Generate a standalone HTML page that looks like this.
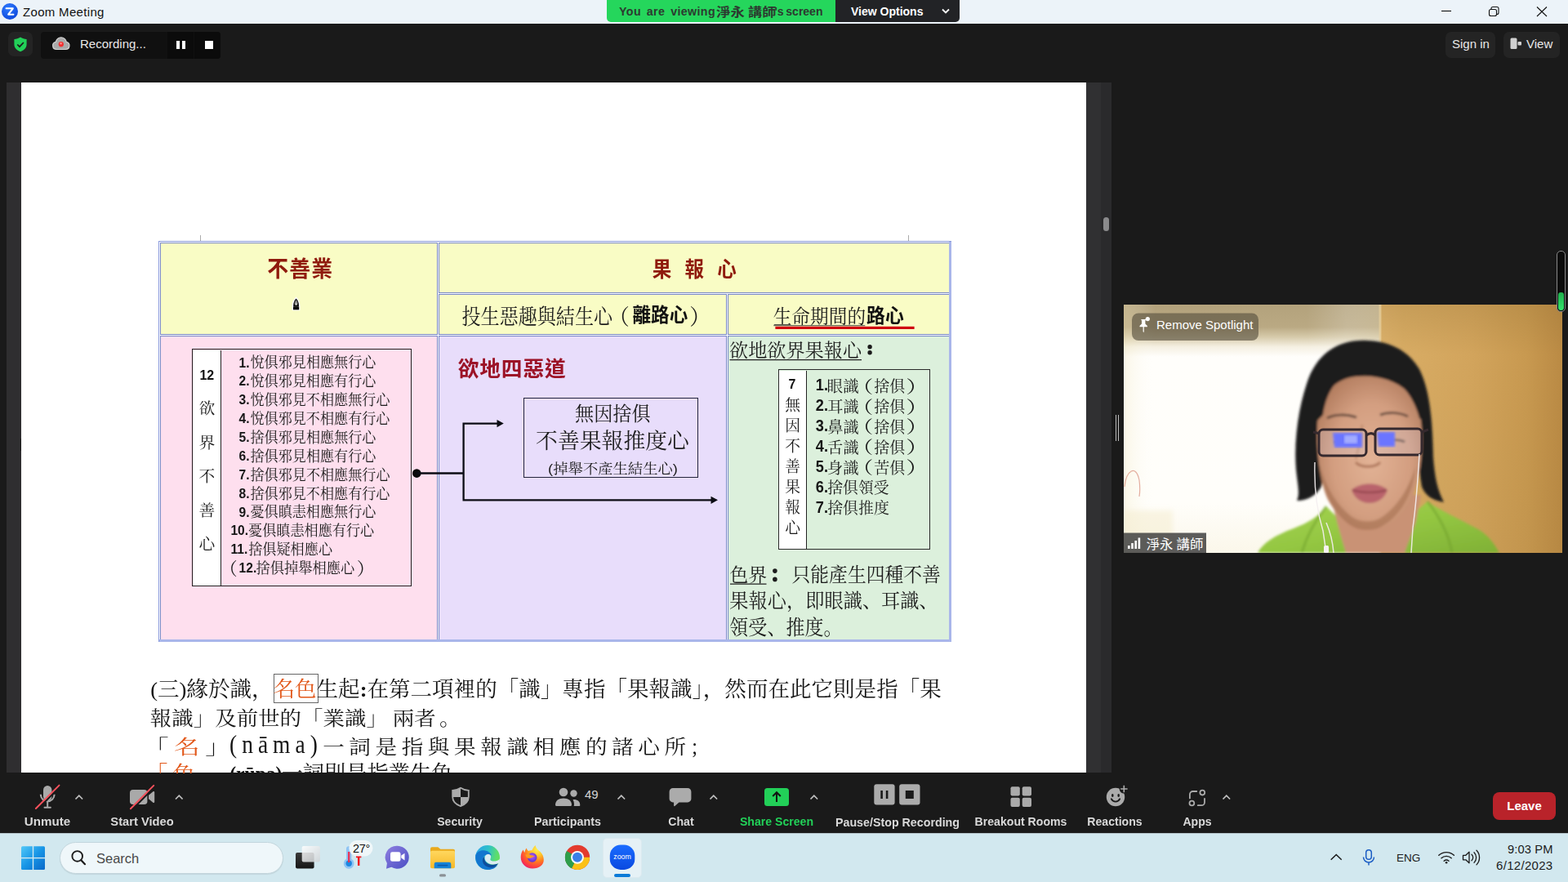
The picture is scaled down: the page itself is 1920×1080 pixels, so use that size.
<!DOCTYPE html>
<html lang="en">
<head>
<meta charset="utf-8">
<title>Zoom Meeting</title>
<style>
*{box-sizing:border-box;margin:0;padding:0}
html,body{width:1920px;height:1080px;overflow:hidden;background:#1a1a1a}
body{position:relative;font-family:"Liberation Sans",sans-serif;color:#fff}
.abs{position:absolute}
svg{position:absolute;overflow:visible}
/* title bar */
#titlebar{left:0;top:0;width:1920px;height:29px;background:#ecf3f9}
#titlebar .ttl{left:28px;top:5px;font-size:15px;line-height:19px;color:#111;letter-spacing:.32px}
/* banner */
#bn-g{left:743px;top:0;width:281px;height:26.5px;background:#25d65c;border-radius:0 0 0 5px}
#bn-d{left:1023px;top:0;width:152px;height:26.5px;background:#222326;border-radius:0 0 5px 0}
.bn-t{top:5px;font-size:14px;line-height:19px;font-weight:bold;white-space:pre}
/* top controls */
.pill{background:#242424;border-radius:7px}
.tctl{font-size:15px;line-height:20px;color:#e8e8e8}
/* slide */
#page{left:26px;top:101px;width:1304px;height:846px;background:#fff;overflow:hidden}
.cell{position:absolute;border:1px solid #7686c6}
.ybg{background:#f9fcc5}.pbg{background:#fedfee}.lbg{background:#e8ddfb}.gbg{background:#dcf0dc}
/* toolbar */
.tb{font-size:15px;line-height:20px;color:#d9d9d9;white-space:nowrap;text-align:center;top:995.6px;font-weight:bold;transform:scaleX(.94)}
.car{stroke:#c2c2c2;stroke-width:1.7;fill:none}
/* taskbar */
#taskbar{left:0;top:1020px;width:1920px;height:60px;background:#d2e8ef}
.tray{font-size:15px;line-height:18px;color:#1b1b1b;white-space:nowrap}
/* slide text */
.tm{font-family:"Liberation Serif","Noto Serif CJK SC",serif;font-size:100px}
.tsb{font-family:"Liberation Sans","Noto Sans CJK TC",sans-serif;font-size:100px;font-weight:bold}
.tsr{font-family:"Liberation Sans","Noto Sans CJK TC",sans-serif;font-size:100px}
.tlb{font-family:"Liberation Sans",sans-serif;font-size:100px;font-weight:bold}
.tls{font-family:"Liberation Serif","Noto Serif CJK SC",serif;font-size:100px}
.tlsb{font-family:"Liberation Serif","Noto Serif CJK SC",serif;font-size:100px;font-weight:bold}
</style>
</head>
<body>

<!-- ===== Title bar ===== -->
<div id="titlebar" class="abs">
  <svg style="left:2px;top:4px" width="20" height="20" viewBox="0 0 20 20">
    <defs><radialGradient id="zg" cx=".4" cy=".3" r=".8"><stop offset="0" stop-color="#2f7bff"/><stop offset="1" stop-color="#0b44d8"/></radialGradient></defs>
    <circle cx="10" cy="10" r="10" fill="url(#zg)"/>
    <path d="M5.6 6.3h8.2l-5.6 7.4h6.2" fill="none" stroke="#fff" stroke-width="2.1" stroke-linejoin="round" stroke-linecap="round"/>
  </svg>
  <div class="abs ttl">Zoom Meeting</div>
  <svg style="left:1760px;top:0" width="160" height="29" viewBox="0 0 160 29" fill="none" stroke="#111" stroke-width="1.1">
    <path d="M5 13.5h12"/>
    <rect x="63.5" y="11.5" width="9" height="8" rx="2"/><path d="M66 11.5v-1a2 2 0 0 1 2-2h5a2 2 0 0 1 2 2v5a2 2 0 0 1-2 2h-.5"/>
    <path d="M122 8.5l12 11.5M134 8.5l-12 11.5"/>
  </svg>
</div>

<!-- ===== Viewing banner ===== -->
<div id="bn-g" class="abs"></div>
<div id="bn-d" class="abs"></div>
<div class="abs bn-t" style="left:758px;color:#2c3a30;word-spacing:2.5px;letter-spacing:.4px;font-size:14.2px">You are viewing</div>
<div class="abs bn-t" style="left:948.5px;color:#2c3a30;word-spacing:-1.2px">'s screen</div>
<div class="abs bn-t" style="left:1042px;color:#fff">View Options</div>
<svg style="left:1152px;top:9px" width="12" height="9" viewBox="0 0 12 9"><path d="M2 2.5l4 4 4-4" fill="none" stroke="#fff" stroke-width="1.8"/></svg>

<!-- ===== Top controls ===== -->
<div class="abs pill" style="left:10px;top:39px;width:30px;height:30px"></div>
<svg style="left:16px;top:45px" width="18" height="19" viewBox="0 0 18 19">
  <path d="M9 .6c2.4 1.6 5 2.3 7.6 2.4v6.3c0 4.2-3 7.3-7.6 9-4.6-1.7-7.6-4.8-7.6-9V3C4 2.9 6.6 2.2 9 .6z" fill="#22d058"/>
  <path d="M5.3 9.5l2.7 2.7 4.9-5.2" fill="none" stroke="#1a1a1a" stroke-width="1.7"/>
</svg>
<div class="abs" style="left:50px;top:39px;width:220px;height:33px;background:#101010;border-radius:4px"></div>
<div class="abs" style="left:205px;top:39px;width:32px;height:33px;background:#0b0b0b"></div>
<div class="abs" style="left:238px;top:39px;width:32px;height:33px;background:#0b0b0b;border-radius:0 4px 4px 0"></div>
<svg style="left:63px;top:43px" width="24" height="19" viewBox="0 0 24 19">
  <path d="M6.3 17.5a4.6 4.6 0 0 1-1-9.1 6.6 6.6 0 0 1 13 0 4.6 4.6 0 0 1-1 9.1z" fill="#a9a9a9" stroke="#d6d6d6" stroke-width="1.2"/>
  <circle cx="11.8" cy="11.2" r="3.1" fill="#f22f2f"/><circle cx="11.6" cy="10.3" r="1.2" fill="#ff8a8a"/>
</svg>
<div class="abs tctl" style="left:98px;top:44px">Recording...</div>
<div class="abs" style="left:216px;top:50px;width:4px;height:10px;background:#fff"></div>
<div class="abs" style="left:223px;top:50px;width:4px;height:10px;background:#fff"></div>
<div class="abs" style="left:251px;top:50px;width:10px;height:10px;background:#fff"></div>

<div class="abs pill" style="left:1770px;top:39px;width:61px;height:32px"></div>
<div class="abs tctl" style="left:1778px;top:44px">Sign in</div>
<div class="abs pill" style="left:1841px;top:39px;width:69px;height:32px"></div>
<svg style="left:1849px;top:46px" width="15" height="15" viewBox="0 0 15 15"><rect x=".5" y=".5" width="8" height="13.5" rx="1.5" fill="#d0d0d0"/><rect x="9.5" y="5" width="4.5" height="4.5" rx="1" fill="#d0d0d0"/></svg>
<div class="abs tctl" style="left:1869px;top:44px">View</div>

<!-- ===== Shared-screen viewer ===== -->
<div class="abs" style="left:8px;top:101px;width:18px;height:846px;background:#2f2e30"></div>
<div class="abs" style="left:25px;top:537px;width:1px;height:15px;background:#1b1b1b"></div>
<div class="abs" style="left:1330px;top:101px;width:18px;height:846px;background:#303032"></div>
<div class="abs" style="left:1348px;top:101px;width:13px;height:846px;background:#2a2a2c"></div>
<div class="abs" style="left:1351px;top:266px;width:7px;height:17px;border-radius:3.5px;background:#8a8a8c"></div>
<div class="abs" style="left:1366px;top:508px;width:1px;height:32px;background:#bdbdbd"></div>
<div class="abs" style="left:1369px;top:508px;width:1px;height:32px;background:#bdbdbd"></div>

<div id="page" class="abs"></div>
<!-- table (page coordinates) -->
<div class="abs" style="left:194px;top:295px;width:971px;height:491px;border:1px solid #8a9adc;background:#fff"></div>
<div class="cell ybg" style="left:196px;top:297px;width:340px;height:113px"></div>
<div class="cell ybg" style="left:537px;top:297px;width:626px;height:62px"></div>
<div class="cell ybg" style="left:537px;top:360px;width:353px;height:50px"></div>
<div class="cell ybg" style="left:891px;top:360px;width:272px;height:50px"></div>
<div class="cell pbg" style="left:196px;top:411px;width:340px;height:373px"></div>
<div class="cell lbg" style="left:537px;top:411px;width:353px;height:373px"></div>
<div class="cell gbg" style="left:891px;top:411px;width:272px;height:373px"></div>
<div class="abs" style="left:1162px;top:296px;width:3px;height:489px;background:#a9b6ea"></div>
<div class="abs" style="left:195px;top:783px;width:970px;height:3px;background:#a9b6ea"></div>
<div class="abs" style="left:245px;top:288px;width:1px;height:7px;background:#aaa"></div>
<div class="abs" style="left:1112px;top:288px;width:1px;height:7px;background:#aaa"></div>
<!-- inner boxes -->
<div class="abs" style="left:235px;top:427px;width:269px;height:291px;border:1.5px solid #222"></div>
<div class="abs" style="left:236.5px;top:428.5px;width:34px;height:288px;background:#fff;border-right:1.5px solid #222"></div>
<div class="abs" style="left:641px;top:487px;width:214px;height:98px;border:1.3px solid #23233a"></div>
<div class="abs" style="left:952.5px;top:452px;width:186.5px;height:221px;border:1.4px solid #2a2a2a"></div>
<div class="abs" style="left:954px;top:453.5px;width:34px;height:218px;background:#fff;border-right:1.4px solid #222"></div>
<div class="abs" style="left:335px;top:825px;width:55px;height:36px;border:1px solid #666"></div>



<!-- ===== Video tile ===== -->
<svg style="left:1376px;top:373px" width="537" height="304" viewBox="1376 373 537 304">
  <defs>
    <clipPath id="vclip"><rect x="1376" y="373" width="537" height="304"/></clipPath>
    <linearGradient id="vbg" x1="0" y1="0" x2="0" y2="1"><stop offset="0" stop-color="#b3a27c"/><stop offset=".09" stop-color="#baa983"/><stop offset=".13" stop-color="#d6caaa"/><stop offset=".17" stop-color="#f5f0e2"/><stop offset=".21" stop-color="#fffefb"/><stop offset=".8" stop-color="#fffefa"/><stop offset="1" stop-color="#fbf7ea"/></linearGradient>
    <linearGradient id="vbgx" x1="0" y1="0" x2="1" y2="0"><stop offset="0" stop-color="#efe4b8" stop-opacity=".3"/><stop offset=".12" stop-color="#fff" stop-opacity="0"/><stop offset=".7" stop-color="#fff" stop-opacity="0"/><stop offset=".85" stop-color="#fff" stop-opacity=".18"/><stop offset="1" stop-color="#e6d9b6" stop-opacity=".3"/></linearGradient>
    <linearGradient id="wood" x1="0" y1="0" x2="1" y2="0"><stop offset="0" stop-color="#ddb26c"/><stop offset=".12" stop-color="#d8ac64"/><stop offset=".5" stop-color="#d2a45c"/><stop offset=".8" stop-color="#c89950"/><stop offset="1" stop-color="#ba8a44"/></linearGradient>
    <linearGradient id="woody" x1="0" y1="0" x2="0" y2="1"><stop offset="0" stop-color="#8a6a30" stop-opacity=".22"/><stop offset=".2" stop-color="#8a6a30" stop-opacity="0"/><stop offset="1" stop-color="#8a6a30" stop-opacity=".08"/></linearGradient>
    <radialGradient id="skin" cx=".52" cy=".55" r=".62"><stop offset="0" stop-color="#e2b295"/><stop offset=".6" stop-color="#d39e80"/><stop offset="1" stop-color="#b07a5c"/></radialGradient>
    <linearGradient id="shirt" x1="0" y1="0" x2="1" y2="1"><stop offset="0" stop-color="#a6d452"/><stop offset=".5" stop-color="#94c742"/><stop offset="1" stop-color="#7fb035"/></linearGradient>
    <filter id="vblur" x="-5%" y="-5%" width="110%" height="110%"><feGaussianBlur stdDeviation="1.4"/></filter>
    <filter id="vblur2" x="-20%" y="-20%" width="140%" height="140%"><feGaussianBlur stdDeviation="3"/></filter>
  </defs>
  <g clip-path="url(#vclip)">
    <rect x="1376" y="373" width="320" height="304" fill="url(#vbg)"/>
    <rect x="1376" y="373" width="320" height="304" fill="url(#vbgx)"/>
    <rect x="1690.5" y="373" width="223" height="304" fill="url(#wood)"/>
    <rect x="1690.5" y="373" width="223" height="304" fill="url(#woody)"/>
    <rect x="1688.5" y="373" width="3" height="304" fill="#e8cf9a" fill-opacity=".7"/>
    <!-- faint items at lower left -->
    <path d="M1377 596c2-20 14-28 18-8 1 8 1 14 0 20" fill="none" stroke="#d98b7a" stroke-width="1.2" stroke-opacity=".7"/>
    <path d="M1376 625h60v52h-60z" fill="#f4ecd0" fill-opacity=".55" filter="url(#vblur2)"/>
    <g filter="url(#vblur)">
      <!-- shirt -->
      <path d="M1540 677c6-12 22-22 44-30 18-7 30-14 40-27l14 14 60 20 36-28 14-12c14 10 40 22 62 34 12 7 20 18 26 29z" fill="url(#shirt)"/>
      <path d="M1624 620c-14 18-24 36-30 57M1748 614c14 18 26 40 30 63" stroke="#6f9f2c" stroke-width="3" fill="none" stroke-opacity=".55"/>
      <!-- neck -->
      <path d="M1630 606h110l-6 32c-4 14-10 26-14 39h-72c-6-20-14-46-18-71z" fill="#c99274"/>
      <!-- hair -->
      <path d="M1675 417c-35-2-63 15-75 53-10 30-16 70-13 105 2 20 5 29 1 38 14 0 24-7 30-17l7-36h110l6 36c4 10 11 16 27 19-8-15-11-30-13-55-1-40-3-80-17-108-14-24-38-34-63-35z" fill="#1d1c1c"/>
      <!-- face -->
      <path d="M1613 520c1-25 13-50 37-57 25-6 55-1 74 17 12 12 17 30 17 50 1 30-3 60-13 82-12 24-32 36-52 36s-38-14-50-36c-10-22-14-57-13-92z" fill="url(#skin)"/>
      <!-- fringe strands -->
      <path d="M1640 440c-18 10-28 40-30 78l10-10c4-26 14-42 30-50 24-8 50-2 66 14 10 10 18 24 22 40l8 6c-2-30-12-56-32-70-22-14-52-16-74-8z" fill="#1d1c1c"/>
      <!-- cheek shade -->
      <path d="M1615 566c8 30 22 54 42 68 10 6 24 6 34 0 18-12 34-34 42-62-2 34-20 62-44 74-10 4-24 4-34-2-22-14-36-44-40-78z" fill="#9c6748" fill-opacity=".5"/>
      <!-- brows / eyes -->
      <path d="M1625 512c10-5 24-5 36-1M1690 508c10-4 24-3 34 2" stroke="#3b2a24" stroke-width="3" fill="none" stroke-opacity=".7"/>
      <path d="M1634 542c6-3 16-3 22 0M1698 541c6-3 16-3 22 0" stroke="#2a1d1a" stroke-width="2.6" fill="none" stroke-opacity=".75"/>
      <!-- nose -->
      <path d="M1660 566c6 7 24 7 30 0" stroke="#9a6045" stroke-width="3" fill="none" stroke-opacity=".7"/>
      <path d="M1668 520c-2 16-4 30-8 42" stroke="#b07c5c" stroke-width="3" fill="none" stroke-opacity=".5"/>
      <!-- lips -->
      <path d="M1655 600c10-10 34-10 44 0-4 12-14 16-22 16s-18-4-22-16z" fill="#b9646c"/>
      <path d="M1656 600c12 4 30 4 42 0" stroke="#8e3f4a" stroke-width="2" fill="none"/>
    </g>
    <!-- glasses -->
    <g>
      <path d="M1632 530h36v18h-34z" fill="#5660ff" filter="url(#vblur)"/>
      <path d="M1686 529h22v18h-20z" fill="#5660ff" filter="url(#vblur)"/>
      <path d="M1646 533h16v10h-16z" fill="#9aa2ff" filter="url(#vblur)"/>
      <rect x="1615" y="526" width="58" height="32" rx="5" fill="#cfd6ff" fill-opacity=".18" stroke="#35292e" stroke-width="3"/>
      <rect x="1684" y="525" width="57" height="32" rx="5" fill="#cfd6ff" fill-opacity=".18" stroke="#35292e" stroke-width="3"/>
      <path d="M1673 533c4-3 8-3 11 0M1608 529l8 2M1741 529l8-3" stroke="#35292e" stroke-width="3" fill="none"/>
    </g>
    <!-- earphone wires -->
    <path d="M1610 566c-1 30 2 58 10 84l4 27M1738 556c-2 34-4 62-8 90l-2 31M1624 640c6 14 8 24 9 37" stroke="#f4eef0" stroke-width="1.5" fill="none" stroke-opacity=".9"/>
    <rect x="1621" y="668" width="6" height="9" rx="1.5" fill="#f6f2f2"/>
  </g>
  <!-- overlays -->
  <rect x="1386" y="383.5" width="155" height="33.5" rx="8" fill="#5b5441" fill-opacity=".66"/>
  <g fill="#fff" transform="translate(1391.8,386.8)">
    <path d="M5.3 4.2h6.2l-.9 1.4v4l2.5 2.6v1.3H9v5.8l-.6 1.2-.6-1.2v-5.8H3.7v-1.3l2.5-2.6v-4z"/>
    <circle cx="13.5" cy="3.8" r="2.6"/>
  </g>
  <rect x="1376" y="652.5" width="101" height="24.5" fill="#454545" fill-opacity=".88"/>
  <g fill="#fff"><rect x="1381" y="668" width="2.6" height="4"/><rect x="1385.2" y="665" width="2.6" height="7"/><rect x="1389.4" y="662" width="2.6" height="10"/><rect x="1393.6" y="658.5" width="2.6" height="13.5"/></g>
</svg>
<div class="abs" style="left:1416px;top:388px;font-size:15px;line-height:20px;color:#fff;white-space:nowrap">Remove Spotlight</div>


<!-- audio meter -->
<div class="abs" style="left:1906px;top:307px;width:11px;height:75px;border:1.5px solid #8a8a8a;border-radius:5px;background:#0c0c0c"></div>
<div class="abs" style="left:1908px;top:358px;width:7px;height:22px;border-radius:3px 3px 3.5px 3.5px;background:linear-gradient(#1faf4c,#35e26c)"></div>

<!-- ===== Bottom toolbar ===== -->
<div class="abs" style="left:0;top:946px;width:1920px;height:74px;background:#1a1a1a"></div>
<svg style="left:0;top:946px" width="1920" height="74" viewBox="0 946 1920 74">
  <!-- mic (muted) -->
  <g fill="#a9a9a9">
    <rect x="53" y="962" width="10.4" height="18.6" rx="5.2"/>
    <path d="M49.8 972.8a8.4 8.4 0 0 0 16.8 0" fill="none" stroke="#a9a9a9" stroke-width="2.1"/>
    <rect x="57.2" y="981.5" width="2" height="7"/><rect x="53.5" y="987.8" width="9.4" height="2" rx="1"/>
  </g>
  <path d="M45.3 991.4l28.6-28.4" stroke="#1a1a1a" stroke-width="2.2"/>
  <path d="M43.9 990l28.6-28.4" stroke="#f4515c" stroke-width="2" stroke-linecap="round"/>
  <path class="car" d="M92.5 978.5l4.3-4.3 4.3 4.3"/>
  <!-- video (off) -->
  <g fill="#a9a9a9">
    <rect x="159" y="967" width="21.4" height="18" rx="3.8"/>
    <path d="M182 973.8l5.4-4.6a1.1 1.1 0 0 1 1.8.8v12a1.1 1.1 0 0 1-1.8.8l-5.4-4.6z"/>
  </g>
  <path d="M161.3 991.7l28.3-28.4" stroke="#1a1a1a" stroke-width="2.2"/>
  <path d="M159.9 990.3l28.3-28.4" stroke="#f4515c" stroke-width="2" stroke-linecap="round"/>
  <path class="car" d="M215 978.5l4.3-4.3 4.3 4.3"/>
  <!-- security shield -->
  <g transform="translate(553,964)">
    <path d="M11 .8c3 2 6.3 2.9 9.8 3v8c0 5.4-3.8 9.2-9.8 11.4C5 21 1.2 17.2 1.2 11.8v-8C4.7 3.7 8 2.8 11 .8z" fill="none" stroke="#ababab" stroke-width="1.8"/>
    <path d="M11 .8C8 2.8 4.7 3.7 1.2 3.8V12H11z" fill="#ababab"/>
    <path d="M11 12h9.8c0 5.2-3.8 9-9.8 11.2z" fill="#ababab"/>
  </g>
  <!-- participants -->
  <g fill="#ababab">
    <circle cx="690" cy="970" r="5.3"/>
    <path d="M680 985.8c0-5.5 4-8.3 10-8.3s10 2.8 10 8.3c0 .7-.5 1.2-1.2 1.2h-17.6c-.7 0-1.2-.5-1.2-1.2z"/>
    <circle cx="702.5" cy="971.5" r="4.2"/>
    <path d="M701.5 979.2c.4 0 .7-.1 1.1-.1 4.7 0 7.7 2.3 7.7 6.8 0 .6-.5 1.1-1.1 1.1h-6.6c.3-.4.4-.9.4-1.4 0-2.7-.5-4.9-1.5-6.4z"/>
  </g>
  <path class="car" d="M756.5 978.5l4.3-4.3 4.3 4.3"/>
  <!-- chat -->
  <path d="M824 965h18a4.4 4.4 0 0 1 4.4 4.4v8.6a4.4 4.4 0 0 1-4.4 4.4h-10.5l-5.2 4.6c-.5.4-1.2.1-1.2-.6v-4h-1.1a4.4 4.4 0 0 1-4.4-4.4v-8.6A4.4 4.4 0 0 1 824 965z" fill="#ababab"/>
  <path class="car" d="M869.5 978.5l4.3-4.3 4.3 4.3"/>
  <!-- share screen -->
  <rect x="936" y="965" width="30" height="22" rx="3.5" fill="#22d058"/>
  <path d="M951 982v-11.5M946.2 975l4.8-4.8 4.8 4.8" fill="none" stroke="#111" stroke-width="2"/>
  <path class="car" d="M992.5 978.5l4.3-4.3 4.3 4.3"/>
  <!-- pause/stop recording -->
  <rect x="1070.3" y="960.3" width="25.3" height="25.3" rx="3" fill="#ababab"/>
  <rect x="1101.2" y="960.3" width="25.3" height="25.3" rx="3" fill="#ababab"/>
  <rect x="1078.3" y="968" width="2.6" height="10" fill="#1a1a1a"/><rect x="1084.8" y="968" width="2.6" height="10" fill="#1a1a1a"/>
  <rect x="1108.8" y="968" width="10" height="10" fill="#1a1a1a"/>
  <!-- breakout rooms -->
  <g fill="#ababab">
    <rect x="1237.5" y="963.3" width="11.3" height="11.3" rx="2"/><rect x="1251.7" y="963.3" width="11.3" height="11.3" rx="2"/>
    <rect x="1237.5" y="976.7" width="11.3" height="11.3" rx="2"/><rect x="1251.7" y="976.7" width="11.3" height="11.3" rx="2"/>
  </g>
  <!-- reactions -->
  <circle cx="1366" cy="976" r="11.2" fill="#ababab"/>
  <circle cx="1376.3" cy="966" r="5.6" fill="#1a1a1a"/>
  <path d="M1372.1 966h8.5M1376.3 961.7v8.5" stroke="#ababab" stroke-width="1.6"/>
  <ellipse cx="1362.3" cy="974" rx="1.3" ry="1.9" fill="#1a1a1a"/><ellipse cx="1369.7" cy="974" rx="1.3" ry="1.9" fill="#1a1a1a"/>
  <path d="M1360.8 978.3c1.2 2.2 3 3.3 5.2 3.3s4-1.1 5.2-3.3" fill="none" stroke="#1a1a1a" stroke-width="1.8" stroke-linecap="round"/>
  <!-- apps -->
  <g fill="none" stroke="#ababab" stroke-width="1.8" stroke-linecap="round">
    <path d="M1456.9 977.4v-4.6a3.8 3.8 0 0 1 3.8-3.8h4.6"/>
    <path d="M1475 977.8v4.6a3.8 3.8 0 0 1-3.8 3.8h-4.4"/>
    <circle cx="1472.3" cy="970.6" r="2.9"/><circle cx="1459.4" cy="983.5" r="2.9"/>
  </g>
  <path class="car" d="M1497.5 978.5l4.3-4.3 4.3 4.3"/>
  <!-- leave -->
  <rect x="1828" y="970" width="77" height="34" rx="8" fill="#b9232a"/>
</svg>
<div class="abs tb" style="left:8px;width:100px;transform:scaleX(1.01)">Unmute</div>
<div class="abs tb" style="left:114px;width:120px;transform:scaleX(.98)">Start Video</div>
<div class="abs tb" style="left:513px;width:100px">Security</div>
<div class="abs tb" style="left:635px;width:120px;transform:scaleX(.955)">Participants</div>
<div class="abs" style="left:716px;top:963.4px;font-size:15px;line-height:20px;color:#d4d4d4">49</div>
<div class="abs tb" style="left:784px;width:100px">Chat</div>
<div class="abs tb" style="left:891px;width:120px;color:#22d058">Share Screen</div>
<div class="abs tb" style="left:1008.5px;width:180px;top:996.6px;transform:scaleX(.95)">Pause/Stop Recording</div>
<div class="abs tb" style="left:1180px;width:140px">Breakout Rooms</div>
<div class="abs tb" style="left:1315px;width:100px">Reactions</div>
<div class="abs tb" style="left:1416px;width:100px">Apps</div>
<div class="abs" style="left:1828px;top:977px;width:77px;text-align:center;font-size:15px;line-height:20px;font-weight:bold;color:#fff">Leave</div>


<!-- ===== Taskbar ===== -->
<div id="taskbar" class="abs"></div>
<div class="abs" style="left:0;top:1020px;width:1920px;height:1px;background:#b4c3c9"></div>
<div class="abs" style="left:72.5px;top:1030.5px;width:274px;height:39px;border-radius:19.5px;background:#eff7fa;border:1px solid #c3d6dd;box-shadow:0 1px 1px rgba(0,0,0,.08)"></div>
<div class="abs" style="left:118px;top:1041.3px;font-size:16.5px;line-height:20px;color:#484848">Search</div>
<div class="abs" style="left:737.5px;top:1025.5px;width:48.5px;height:49px;border-radius:5px;background:#e5f1f6;border:1px solid #dbe9ef"></div>
<svg style="left:0;top:1020px" width="1920" height="60" viewBox="0 1020 1920 60">
  <defs>
    <linearGradient id="wl" x1="0" y1="0" x2="1" y2="1"><stop offset="0" stop-color="#52c8f8"/><stop offset=".5" stop-color="#1795e6"/><stop offset="1" stop-color="#0a68c8"/></linearGradient>
    <linearGradient id="tv1" x1="0" y1="0" x2="0" y2="1"><stop offset="0" stop-color="#3a3a3a"/><stop offset="1" stop-color="#161616"/></linearGradient>
    <linearGradient id="tv2" x1="0" y1="0" x2="1" y2="1"><stop offset="0" stop-color="#ffffff"/><stop offset="1" stop-color="#cfd3d6"/></linearGradient>
    <linearGradient id="pc" x1="0" y1="0" x2="1" y2="1"><stop offset="0" stop-color="#8f7fe0"/><stop offset="1" stop-color="#4a4fc4"/></linearGradient>
    <linearGradient id="fo" x1="0" y1="0" x2="0" y2="1"><stop offset="0" stop-color="#ffd75e"/><stop offset="1" stop-color="#f7b928"/></linearGradient>
    <linearGradient id="ed" x1="0" y1=".2" x2="1" y2=".45"><stop offset="0" stop-color="#2aa4ea"/><stop offset=".5" stop-color="#2ec2c8"/><stop offset=".85" stop-color="#5bdc70"/><stop offset="1" stop-color="#62e060"/></linearGradient>
    <radialGradient id="ff" cx=".72" cy=".18" r=".95"><stop offset="0" stop-color="#fff04e"/><stop offset=".3" stop-color="#ffc32a"/><stop offset=".55" stop-color="#ff7a20"/><stop offset=".82" stop-color="#fb3a44"/><stop offset="1" stop-color="#e3187c"/></radialGradient>
    <radialGradient id="ffp" cx=".5" cy=".4" r=".6"><stop offset="0" stop-color="#b45cf5"/><stop offset="1" stop-color="#5b2fd0"/></radialGradient>
    <linearGradient id="zm" x1="0" y1="0" x2="0" y2="1"><stop offset="0" stop-color="#1a6cff"/><stop offset="1" stop-color="#0a49e0"/></linearGradient>
  </defs>
  <!-- start -->
  <g fill="url(#wl)">
    <rect x="26" y="1036.3" width="29" height="28.7" rx="1.5"/>
  </g>
  <rect x="39.8" y="1036" width="1.4" height="29.5" fill="#d2e8ef"/><rect x="25.5" y="1049.9" width="30" height="1.4" fill="#d2e8ef"/>
  <!-- search icon -->
  <circle cx="94.7" cy="1048.4" r="6.3" fill="none" stroke="#1c1c1c" stroke-width="1.9"/>
  <path d="M99.3 1053.2l4.7 5" stroke="#1c1c1c" stroke-width="2.2" stroke-linecap="round"/>
  <!-- task view -->
  <rect x="362" y="1044" width="22.6" height="19.5" rx="2" fill="url(#tv1)"/>
  <rect x="369.7" y="1036" width="22.2" height="19.4" rx="2" fill="url(#tv2)" fill-opacity=".86"/>
  <!-- weather -->
  <path d="M424 1039.5a3.2 3.2 0 0 1 6.4 0v12.3a6.4 6.4 0 1 1-6.4 0z" fill="#8fc4f4"/>
  <circle cx="427.2" cy="1057.2" r="3.7" fill="#1e88e0"/><rect x="426" y="1043" width="2.4" height="13" fill="#e8365a"/>
  <path d="M439.2 1060v-11M436 1049h6.4" stroke="#f0141e" stroke-width="2.4"/><path d="M439.2 1043.5l3.2 4.5h-6.4z" fill="#f58a8a"/>
  <rect x="427.3" y="1029" width="29.2" height="19.4" rx="9.7" fill="#f2f8fa" fill-opacity=".93"/>
  <!-- chat -->
  <path d="M486.7 1035.7a14.2 14 0 1 1-7.4 26l-6.3 2 .9-6.6a14.2 14 0 0 1 12.8-21.4z" fill="url(#pc)"/>
  <rect x="478" y="1043.3" width="12.5" height="11.5" rx="2.3" fill="#fff"/><path d="M491.3 1047.6l4.2-2.9v8.8l-4.2-2.9z" fill="#fff"/>
  <!-- explorer -->
  <path d="M527 1039.2a2 2 0 0 1 2-2h7.3l3 2.5H555a2 2 0 0 1 2 2v3.3h-30z" fill="#e9a91c"/>
  <rect x="527" y="1041.8" width="30" height="21.5" rx="1.8" fill="url(#fo)"/>
  <path d="M531.7 1063.3v-5.3a2.3 2.3 0 0 1 2.3-2.3h16a2.3 2.3 0 0 1 2.3 2.3v5.3z" fill="#1583d8"/><rect x="535.5" y="1058.8" width="13" height="1.7" rx=".8" fill="#0b5cad"/>
  <rect x="538" y="1070.3" width="8" height="3.2" rx="1.6" fill="#8b9196"/>
  <!-- edge -->
  <g transform="translate(582,1035)">
    <circle cx="15" cy="15" r="15" fill="url(#ed)"/>
    <path d="M.3 12.5C2 7.5 7 5.5 12 6.5c4 .8 7 3 8 6-5-2.5-10-.5-11 4-1 5 3 10 10 10.5 3.5.2 6.5-1 8.5-3C25 28 20 30.3 14.5 30 6 29.5-.5 22 .3 12.5z" fill="#1376cf"/>
    <path d="M9 17c-1 5 3 10 10 10.5 4 .2 7.5-2 9-5.5-4 2-9 2.3-12.5.5-3.5-2-5-5.5-4-8.5-1.3.3-2.2 1.5-2.5 3z" fill="#0e4d9d"/>
    <path d="M11.5 15.5c0-3.3 2.5-5 5-4.5 2.6.5 3.2 3 2.2 5-1 1.6 0 3.2 2.5 3.5 3 .3 6.2-.5 8.7-2.5.1 1.7-.3 3.3-1 4.8-4 2-9 2.3-12.5.5-3.3-1.7-4.9-4.4-4.900-6.800z" fill="#dcecf2"/>
  </g>
  <!-- firefox -->
  <path d="M652 1063.5c-8 0-14.3-6-14.3-13.800 0-4 1.200-7 3.100-9.200.2 1.500.8 2.600 1.700 3.400.3-2.200 1-4 2.300-5.400.3 1.500 1 2.600 2.200 3.400 1.200-.6 2.800-.9 4.200-.7 1.200-1.800 1.800-4 4.400-6.300.4 3.800 3.400 5.500 6 8.100 2.800 2.800 4.200 6 4.200 10 0 6-5.400 10.500-13.800 10.500z" fill="url(#ff)"/>
  <circle cx="651.7" cy="1050" r="5.8" fill="url(#ffp)"/>
  <path d="M643.5 1046.5c2.200-1 5.200-.7 6.700.7 2.300.2 4 .9 5.100 2-1.500-.3-3 0-4 .9-1.600 1.300-4 1.300-5.700.1-1.300-1-2.200-2.300-2.100-3.700z" fill="#ff9a1e"/>
  <!-- chrome -->
  <circle cx="707" cy="1049.8" r="15.1" fill="#e33b2e"/>
  <path d="M707 1049.8l-13.100-7.500a15.100 15.100 0 0 0 6.200 21z" fill="#2f9e4b"/>
  <path d="M694 1042.3a15.100 15.100 0 0 0 6.300 21l6.700-13.500z" fill="#2f9e4b"/>
  <path d="M707 1049.8h15.100a15.100 15.100 0 0 1-21.900 13.500z" fill="#fbc116"/>
  <circle cx="707" cy="1049.8" r="7.9" fill="#fff"/><circle cx="707" cy="1049.8" r="6" fill="#3a7fe8"/>
  <!-- zoom -->
  <rect x="746.8" y="1034.6" width="30.5" height="30.3" rx="13" fill="url(#zm)"/>
  <rect x="752" y="1070" width="20" height="4" rx="2" fill="#0b7bd8"/>
  <!-- tray -->
  <path d="M1629.7 1052.8l6.500-6.300 6.500 6.300" fill="none" stroke="#1a1a1a" stroke-width="1.5"/>
  <g fill="none" stroke="#1a5cc4" stroke-width="1.5">
    <rect x="1672.7" y="1040.8" width="6.6" height="11.5" rx="3.3"/>
    <path d="M1669.5 1049.5a6.500 6.500 0 0 0 13 0M1676 1056v3.500"/>
  </g>
  <g fill="none" stroke="#1a1a1a" stroke-width="1.4" stroke-linecap="round">
    <path d="M1761.8 1047.3a13.500 13.500 0 0 1 18.600 0M1765 1050.8a9 9 0 0 1 12.200 0M1768.2 1054.2a4.500 4.500 0 0 1 5.800 0"/>
  </g>
  <circle cx="1771.1" cy="1056.2" r="1.3" fill="#1a1a1a"/>
  <g fill="none" stroke="#1a1a1a" stroke-width="1.3" stroke-linejoin="round">
    <path d="M1791.5 1047.3h3.300l4.200-4v13.500l-4.200-4h-3.300z"/>
    <path d="M1802 1046.3a5 5 0 0 1 0 7.500M1805 1043.7a9 9 0 0 1 0 12.700M1808 1041.2a12.800 12.800 0 0 1 0 17.700" stroke-linecap="round"/>
  </g>
</svg>
<div class="abs" style="left:429px;top:1029.5px;width:27px;text-align:center;font-size:14.5px;line-height:18px;color:#111;letter-spacing:-.3px">27°</div>
<div class="abs" style="left:746.8px;top:1043.8px;width:30.5px;text-align:center;font-size:8.8px;line-height:10px;color:#fff;letter-spacing:0">zoom</div>
<div class="abs tray" style="left:1710px;top:1041.5px;font-size:13.5px">ENG</div>
<div class="abs tray" style="right:18.5px;top:1031px;font-size:14.7px;letter-spacing:.1px">9:03 PM</div>
<div class="abs tray" style="right:18.5px;top:1051px;font-size:15px;letter-spacing:.3px">6/12/2023</div>


<svg style="left:26px;top:101px;overflow:hidden;filter:blur(.35px)" width="1304" height="846" viewBox="26 101 1304 846" role="img" aria-label="不善業 果報心 投生惡趣與結生心（離路心） 生命期間的路心 12欲界不善心 欲地四惡道 無因捨俱不善果報推度心 (掉舉不產生結生心) 欲地欲界果報心 7無因不善果報心 色界：只能產生四種不善果報心，即眼識、耳識、領受、推度。 (三)緣於識，名色生起">

<path d="M947.3 398.7h112" stroke="#333" stroke-width=".9"/>
<rect x="949.4" y="399.8" width="170.2" height="3.2" fill="#d0000f"/>
<path d="M893.5 440.6h161.5" stroke="#222" stroke-width="1.3"/>
<path d="M894 715.2h44.5" stroke="#222" stroke-width="1.3"/>
<circle cx="510.3" cy="579.6" r="5.3" fill="#0a0a0a"/>
<g fill="#1b1b1b"><circle cx="1065.1" cy="424.7" r="2.7"/><circle cx="1065.1" cy="431.7" r="2.7"/><circle cx="948.9" cy="699.1" r="2.8"/><circle cx="948.9" cy="709.4" r="2.8"/></g>
<path d="M510 579.5h57.5M567.6 611.3V518.6h42M566.5 612.3h305" fill="none" stroke="#0c0c14" stroke-width="2.3"/>
<path d="M608.5 514l8.3 4.6-8.3 4.6zM870.5 607.7l8.5 4.6-8.5 4.6z" fill="#0c0c14"/>
<g transform="translate(358,364)">
  <path d="M4.6 .4C7.3 3 8.8 6.3 8.8 10.2V15.6H.4V10.2C.4 6.3 1.9 3 4.6 .4z" fill="#fff" stroke="#fff" stroke-width="1.2"/>
  <path d="M4.6 1.6C6.8 3.9 8 6.8 8 10.2l-1 1.4H2.2l-1-1.4C1.2 6.8 2.4 3.9 4.6 1.6z" fill="#111"/>
  <path d="M4.6 3.5c.9 1.3 1.4 2.9 1.4 4.6 0 1-.6 1.7-1.4 1.7s-1.4-.7-1.4-1.700c0-1.700.5-3.300 1.400-4.600z" fill="#fff"/>
  <path d="M4.6 4.5v4" stroke="#111" stroke-width=".7"/>
  <rect x="1" y="11.3" width="7.2" height="4" fill="#050505"/>
</g>
<g transform="translate(327.34 339.12) scale(0.2591 0.2751)" fill="#8f1a0d"><text class="tsb" x="0 104 208">不善業</text></g>
<g transform="translate(798.86 339.23) scale(0.235 0.2577)" fill="#8f1a0d"><text class="tsb" x="0 169 338">果報心</text></g>
<g transform="translate(565.54 397.26) scale(0.2307 0.2611)" fill="#1b1b1b"><text class="tm">投生惡趣與結生心</text></g>
<g transform="translate(744.92 397.05) scale(0.2586 0.2644)" fill="#1b1b1b"><text class="tm">（</text></g>
<g transform="translate(774.57 394.31) scale(0.2254 0.2404)" fill="#111"><text class="tsb">離路心</text></g>
<g transform="translate(844.22 397.05) scale(0.2586 0.2644)" fill="#1b1b1b"><text class="tm">）</text></g>
<g transform="translate(946.7 396.23) scale(0.2268 0.2398)" fill="#1b1b1b"><text class="tm">生命期間的</text></g>
<g transform="translate(1061.11 394.77) scale(0.2284 0.2337)" fill="#111"><text class="tsb">路心</text></g>
<g transform="translate(306.44 450.46) scale(0.1712 0.1853)" fill="#1b1b1b"><text class="tm">悅俱邪見相應無行心</text></g>
<g transform="translate(292.6 449.5) scale(0.156 0.166)" fill="#161616"><text class="tlb">1.</text></g>
<g transform="translate(306.44 473.24) scale(0.1712 0.1842)" fill="#1b1b1b"><text class="tm">悅俱邪見相應有行心</text></g>
<g transform="translate(292.6 472.38) scale(0.156 0.166)" fill="#161616"><text class="tlb">2.</text></g>
<g transform="translate(306.44 496.22) scale(0.1711 0.1853)" fill="#1b1b1b"><text class="tm">悅俱邪見不相應無行心</text></g>
<g transform="translate(292.6 495.26) scale(0.156 0.166)" fill="#161616"><text class="tlb">3.</text></g>
<g transform="translate(306.44 519) scale(0.1711 0.1842)" fill="#1b1b1b"><text class="tm">悅俱邪見不相應有行心</text></g>
<g transform="translate(292.6 518.14) scale(0.156 0.166)" fill="#161616"><text class="tlb">4.</text></g>
<g transform="translate(306.47 541.98) scale(0.1712 0.1853)" fill="#1b1b1b"><text class="tm">捨俱邪見相應無行心</text></g>
<g transform="translate(292.6 541.02) scale(0.156 0.166)" fill="#161616"><text class="tlb">5.</text></g>
<g transform="translate(306.47 564.76) scale(0.1712 0.1842)" fill="#1b1b1b"><text class="tm">捨俱邪見相應有行心</text></g>
<g transform="translate(292.6 563.9) scale(0.156 0.166)" fill="#161616"><text class="tlb">6.</text></g>
<g transform="translate(306.47 587.74) scale(0.1711 0.1853)" fill="#1b1b1b"><text class="tm">捨俱邪見不相應無行心</text></g>
<g transform="translate(292.6 586.78) scale(0.156 0.166)" fill="#161616"><text class="tlb">7.</text></g>
<g transform="translate(306.47 610.52) scale(0.1711 0.1842)" fill="#1b1b1b"><text class="tm">捨俱邪見不相應有行心</text></g>
<g transform="translate(292.6 609.66) scale(0.156 0.166)" fill="#161616"><text class="tlb">8.</text></g>
<g transform="translate(306.39 633.48) scale(0.1713 0.184)" fill="#1b1b1b"><text class="tm">憂俱瞋恚相應無行心</text></g>
<g transform="translate(292.6 632.54) scale(0.156 0.166)" fill="#161616"><text class="tlb">9.</text></g>
<g transform="translate(304.09 656.29) scale(0.1713 0.1832)" fill="#1b1b1b"><text class="tm">憂俱瞋恚相應有行心</text></g>
<g transform="translate(282.4 655.42) scale(0.156 0.166)" fill="#161616"><text class="tlb">10.</text></g>
<g transform="translate(304.17 679.22) scale(0.1716 0.1853)" fill="#1b1b1b"><text class="tm">捨俱疑相應心</text></g>
<g transform="translate(282.4 678.3) scale(0.156 0.166)" fill="#161616"><text class="tlb">11.</text></g>
<g transform="translate(313.47 702.14) scale(0.1726 0.1857)" fill="#1b1b1b"><text class="tm">捨俱掉舉相應心</text></g>
<g transform="translate(292.6 701.18) scale(0.156 0.166)" fill="#161616"><text class="tlb">12.</text></g>
<g transform="translate(269.32 703.56) scale(0.2138 0.2154)" fill="#1b1b1b"><text class="tm">（</text></g>
<g transform="translate(437 703.56) scale(0.2138 0.2154)" fill="#1b1b1b"><text class="tm">）</text></g>
<g transform="translate(244.4 465) scale(0.16 0.168)" fill="#111"><text class="tlb">12</text></g>
<g transform="translate(243.6 507.42) scale(0.198 0.198)" fill="#1b1b1b"><text class="tm">欲</text></g><g transform="translate(243.6 548.92) scale(0.198 0.198)" fill="#1b1b1b"><text class="tm">界</text></g><g transform="translate(243.6 590.12) scale(0.198 0.198)" fill="#1b1b1b"><text class="tm">不</text></g><g transform="translate(243.6 631.92) scale(0.198 0.198)" fill="#1b1b1b"><text class="tm">善</text></g><g transform="translate(243.6 672.72) scale(0.198 0.198)" fill="#1b1b1b"><text class="tm">心</text></g>
<g transform="translate(560.84 460.64) scale(0.2574 0.2628)" fill="#9c1327"><text class="tsb" x="0 103 206 309 412">欲地四惡道</text></g>
<g transform="translate(704.09 514.65) scale(0.2313 0.2373)" fill="#1b1b1b"><text class="tm">無因捨俱</text></g>
<g transform="translate(656.11 548.77) scale(0.2684 0.265)" fill="#1b1b1b"><text class="tm">不善果報推度心</text></g>
<g transform="translate(671.12 579.59) scale(0.1831 0.1703)" fill="#1b1b1b"><text class="tm" x="0 33.8 133.8 233.8 333.8 433.8 533.8 633.8 733.8 833.8"><tspan class="tsr">(</tspan>掉舉不產生結生心<tspan class="tsr">)</tspan></text></g>
<g transform="translate(893.05 437.12) scale(0.2315 0.2265)" fill="#1b1b1b"><text class="tm">欲地欲界果報心</text></g>
<g transform="translate(1012.57 479.83) scale(0.1959 0.1944)" fill="#1b1b1b"><text class="tm">眼識</text></g>
<g transform="translate(1042.67 480.62) scale(0.2655 0.2111)" fill="#1b1b1b"><text class="tm">（</text></g>
<g transform="translate(1070.21 479.9) scale(0.1899 0.1948)" fill="#1b1b1b"><text class="tm">捨俱</text></g>
<g transform="translate(1109.2 480.62) scale(0.2793 0.2111)" fill="#1b1b1b"><text class="tm">）</text></g>
<g transform="translate(998.8 478.4) scale(0.182 0.194)" fill="#161616"><text class="tlb">1.</text></g>
<g transform="translate(1013.21 504.78) scale(0.1926 0.1948)" fill="#1b1b1b"><text class="tm">耳識</text></g>
<g transform="translate(1042.67 505.52) scale(0.2655 0.2111)" fill="#1b1b1b"><text class="tm">（</text></g>
<g transform="translate(1070.21 504.8) scale(0.1899 0.1948)" fill="#1b1b1b"><text class="tm">捨俱</text></g>
<g transform="translate(1109.2 505.52) scale(0.2793 0.2111)" fill="#1b1b1b"><text class="tm">）</text></g>
<g transform="translate(998.8 503.3) scale(0.182 0.194)" fill="#161616"><text class="tlb">2.</text></g>
<g transform="translate(1013.19 529.7) scale(0.1927 0.1929)" fill="#1b1b1b"><text class="tm">鼻識</text></g>
<g transform="translate(1042.67 530.42) scale(0.2655 0.2111)" fill="#1b1b1b"><text class="tm">（</text></g>
<g transform="translate(1070.21 529.7) scale(0.1899 0.1948)" fill="#1b1b1b"><text class="tm">捨俱</text></g>
<g transform="translate(1109.2 530.42) scale(0.2793 0.2111)" fill="#1b1b1b"><text class="tm">）</text></g>
<g transform="translate(998.8 528.2) scale(0.182 0.194)" fill="#161616"><text class="tlb">3.</text></g>
<g transform="translate(1013.05 554.65) scale(0.1934 0.1959)" fill="#1b1b1b"><text class="tm">舌識</text></g>
<g transform="translate(1042.67 555.32) scale(0.2655 0.2111)" fill="#1b1b1b"><text class="tm">（</text></g>
<g transform="translate(1070.21 554.6) scale(0.1899 0.1948)" fill="#1b1b1b"><text class="tm">捨俱</text></g>
<g transform="translate(1109.2 555.32) scale(0.2793 0.2111)" fill="#1b1b1b"><text class="tm">）</text></g>
<g transform="translate(998.8 553.1) scale(0.182 0.194)" fill="#161616"><text class="tlb">4.</text></g>
<g transform="translate(1012.83 579.51) scale(0.1945 0.1944)" fill="#1b1b1b"><text class="tm">身識</text></g>
<g transform="translate(1042.67 580.22) scale(0.2655 0.2111)" fill="#1b1b1b"><text class="tm">（</text></g>
<g transform="translate(1070.15 579.5) scale(0.1902 0.195)" fill="#1b1b1b"><text class="tm">苦俱</text></g>
<g transform="translate(1109.2 580.22) scale(0.2793 0.2111)" fill="#1b1b1b"><text class="tm">）</text></g>
<g transform="translate(998.8 578) scale(0.182 0.194)" fill="#161616"><text class="tlb">5.</text></g>
<g transform="translate(1013.21 604.4) scale(0.1889 0.1948)" fill="#1b1b1b"><text class="tm">捨俱領受</text></g>
<g transform="translate(998.8 602.9) scale(0.182 0.194)" fill="#161616"><text class="tlb">6.</text></g>
<g transform="translate(1013.21 629.28) scale(0.1891 0.1923)" fill="#1b1b1b"><text class="tm">捨俱推度</text></g>
<g transform="translate(998.8 627.8) scale(0.182 0.194)" fill="#161616"><text class="tlb">7.</text></g>
<g transform="translate(965.6 476.2) scale(0.16 0.168)" fill="#111"><text class="tlb">7</text></g>
<g transform="translate(961.2 502.54) scale(0.188 0.188)" fill="#1b1b1b"><text class="tm">無</text></g><g transform="translate(961.2 527.54) scale(0.188 0.188)" fill="#1b1b1b"><text class="tm">因</text></g><g transform="translate(961.2 552.54) scale(0.188 0.188)" fill="#1b1b1b"><text class="tm">不</text></g><g transform="translate(961.2 577.54) scale(0.188 0.188)" fill="#1b1b1b"><text class="tm">善</text></g><g transform="translate(961.2 602.54) scale(0.188 0.188)" fill="#1b1b1b"><text class="tm">果</text></g><g transform="translate(961.2 627.54) scale(0.188 0.188)" fill="#1b1b1b"><text class="tm">報</text></g><g transform="translate(961.2 652.54) scale(0.188 0.188)" fill="#1b1b1b"><text class="tm">心</text></g>
<g transform="translate(893.38 712.29) scale(0.228 0.2325)" fill="#1b1b1b"><text class="tm">色界</text></g>
<g transform="translate(969.52 712.41) scale(0.228 0.2344)" fill="#1b1b1b"><text class="tm">只能產生四種不善</text></g>
<g transform="translate(893.28 743.91) scale(0.2324 0.2433)" fill="#1b1b1b"><text class="tm">果報心，即眼識、耳識、</text></g>
<g transform="translate(893.31 776.66) scale(0.2306 0.2543)" fill="#1b1b1b"><text class="tm">領受、推度。</text></g>
<g transform="translate(184.13 853.06) scale(0.2655 0.2578)" fill="#141414"><text class="tls">(三)緣於識，<tspan fill="#e2581a">名色</tspan>生起<tspan class="tlsb">:</tspan>在第二項裡的「識」專指「果報識」，然而在此它則是指「果</text></g>
<g transform="translate(183.75 887.99) scale(0.2648 0.2419)" fill="#141414"><text class="tm" x="0 100 200 300 400 500 600 700 800 900 1000 1122 1222 1338">報識」及前世的「業識」兩者。</text></g>
<g transform="translate(174.89 922.65) scale(0.3162 0.2405)" fill="#141414"><text class="tm" x="0 120.8 241.6">「<tspan fill="#e2581a">名</tspan>」</text></g>
<g transform="translate(280.99 921.93) scale(0.2742 0.3088)" fill="#141414"><text class="tls" x="0 55.3 127.3 193.69 293.47 359.85">(nāma)</text></g>
<g transform="translate(395.13 922.75) scale(0.2664 0.2409)" fill="#141414"><text class="tm" x="0 120.8 241.6 362.4 483.2 604 724.8 845.6 966.4 1087.2 1208 1328.8 1449.6 1570.4">一詞是指與果報識相應的諸心所</text></g>
<g transform="translate(847.15 922.93) scale(0.2409 0.2648)" fill="#141414"><text class="tls">;</text></g>
<g transform="translate(177.33 956.72) scale(0.2819 0.2636)" fill="#e2581a"><text class="tm" x="0 120.8">「色</text></g>
<g transform="translate(281.16 955.67) scale(0.2365 0.2503)" fill="#141414"><text class="tlsb">(rūpa)</text></g>
<g transform="translate(344.65 956.28) scale(0.2624 0.2583)" fill="#141414"><text class="tm">一詞則是指業生色</text></g>
<g transform="translate(555.33 962.15) scale(0.3132 0.3203)" fill="#141414"><text class="tm">。</text></g>
</svg>
<svg style="left:0;top:0" width="1920" height="1080" viewBox="0 0 1920 1080" role="img" aria-label="淨永 講師"><g transform="translate(877.18 19.62) scale(0.1724 0.1517)" fill="#2c3a30"><text class="tsb" x="0 100 225 325">淨永講師</text></g><g transform="translate(1403.69 671.67) scale(0.1638 0.1638)" fill="#ffffff"><text class="tsr" x="0 100 225 325">淨永講師</text></g></svg>
</body>
</html>
